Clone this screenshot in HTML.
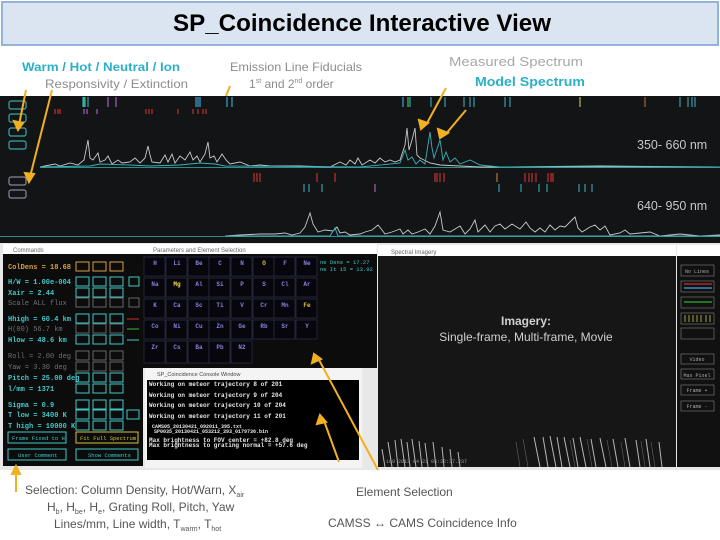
<!DOCTYPE html>
<html><head><meta charset="utf-8"><style>
body{margin:0;width:720px;height:540px;background:#fff;overflow:hidden;font-family:"Liberation Sans",sans-serif}
svg{display:block}
.m{font-family:"Liberation Mono",monospace}
</style></head><body>
<svg width="720" height="540" viewBox="0 0 720 540" xmlns="http://www.w3.org/2000/svg">
<rect x="2" y="2" width="716" height="43" fill="#dbe5f1" stroke="#95b3d7" stroke-width="2"/>
<text x="362" y="31" font-size="24" font-weight="bold" text-anchor="middle" fill="#000" textLength="378" lengthAdjust="spacingAndGlyphs">SP_Coincidence Interactive View</text>
<g font-size="12">
<text x="22" y="71" fill="#2bb0c8" font-weight="bold" textLength="158" lengthAdjust="spacingAndGlyphs">Warm / Hot / Neutral / Ion</text>
<text x="45" y="88" fill="#8c8c8c" textLength="143" lengthAdjust="spacingAndGlyphs">Responsivity / Extinction</text>
<text x="230" y="71" fill="#8c8c8c" textLength="132" lengthAdjust="spacingAndGlyphs">Emission Line Fiducials</text>
<text x="249" y="88" fill="#8c8c8c">1<tspan font-size="7" dy="-5">st</tspan><tspan dy="5"> and 2</tspan><tspan font-size="7" dy="-5">nd</tspan><tspan dy="5"> order</tspan></text>
<text x="449" y="66" fill="#a8a8a8" font-size="13" textLength="134" lengthAdjust="spacingAndGlyphs">Measured Spectrum</text>
<text x="475" y="86" fill="#2bb0c8" font-weight="bold" font-size="13" textLength="110" lengthAdjust="spacingAndGlyphs">Model Spectrum</text>
</g>
<rect x="0" y="96" width="720" height="148" fill="#131416"/>
<g fill="none" stroke="#3aa8a8" stroke-width="1.2">
<rect x="9" y="101" width="17" height="8" rx="2"/><rect x="9" y="114" width="17" height="8" rx="2"/><rect x="9" y="128" width="17" height="8" rx="2"/><rect x="9" y="141" width="17" height="8" rx="2"/>
<rect x="9" y="177" width="17" height="8" rx="2" stroke="#889"/><rect x="9" y="190" width="17" height="8" rx="2" stroke="#889"/>
</g>
<line x1="40" y1="167.5" x2="720" y2="167.5" stroke="#2a8c8c"/>
<line x1="0" y1="236.5" x2="720" y2="236.5" stroke="#2a8c8c"/>
<g stroke-width="1.2">
<path d="M83 97v10M85 97v10M88 97v10M196 97v10M198 97v10M200 97v10M227 97v10M232 97v10M403 97v10M410 97v10" stroke="#3aa0d0"/>
<path d="M84 97v10" stroke="#30d040"/>
<path d="M108 97v10M116 97v10" stroke="#a060c0"/>
<path d="M55 109v5M58 109v5M60 109v5M146 109v5M149 109v5M152 109v5M178 109v5M193 109v5M198 109v5M203 109v5M206 109v5" stroke="#c03030"/>
<path d="M84 109v5M87 109v5M97 109v5" stroke="#a060c0"/>
<path d="M408 97v10" stroke="#40c040"/>
<path d="M431 97v10M445 97v10M464 97v10M470 97v10M474 97v10M505 97v10M510 97v10M680 97v10M688 97v10M692 97v10M695 97v10" stroke="#3a9aaa"/>
<path d="M580 97v10" stroke="#c0b060"/><path d="M645 97v10" stroke="#a06040"/>
<path d="M254 173v9M257 173v9M260 173v9M317 173v9M335 173v9M435 173v9M437 173v9M440 173v9M444 173v9M525 173v9M529 173v9M532 173v9M536 173v9M548 173v9M551 173v9M553 173v9" stroke="#c03030"/>
<path d="M304 184v8M309 184v8M322 184v8M499 184v8M521 184v8M539 184v8M547 184v8M579 184v8M585 184v8M592 184v8" stroke="#3a9aaa"/>
<path d="M375 184v8" stroke="#a060a0"/><path d="M497 173v9" stroke="#c07040"/>
</g>
<polyline fill="none" stroke="#c8c8c8" stroke-width="0.9" points="40,167 55,164 60,166 70,163 78,165 84,160 88,140 90,158 93,160 98,153 100,162 105,160 108,156 112,164 118,160 122,163 130,162 135,158 140,163 145,158 148,146 150,155 152,162 160,163 165,155 168,162 172,154 175,163 180,156 185,160 190,152 193,160 197,156 200,162 205,154 208,142 210,158 214,156 217,162 222,154 226,160 230,164 240,162 250,166 260,165 270,166 300,166 330,167 340,162 346,165 350,160 355,164 358,158 362,165 370,160 375,163 380,158 385,162 390,160 395,162 400,160 405,145 407,128 409,150 412,140 415,128 417,155 420,158 424,160 430,163 440,165 460,166 480,167 500,167 600,166 720,167"/>
<polyline fill="none" stroke="#3ab0b8" stroke-width="0.9" points="40,167 90,166 100,164 130,165 150,166 180,165 200,163 215,164 225,166 360,167 400,163 405,150 408,160 412,157 416,164 420,160 425,164 430,132 432,148 434,158 440,140 443,160 446,152 450,162 455,158 460,164 470,160 480,165 500,167 720,167"/>
<polyline fill="none" stroke="#c8c8c8" stroke-width="0.9" points="225,236 240,235 260,234 275,234 285,233 292,235 300,233 305,227 310,213 313,224 318,232 325,230 333,231 337,227 340,233 345,232 350,235 360,234 365,232 372,230 378,225 382,230 385,234 392,232 400,229 403,234 408,230 412,234 418,232 425,229 430,234 435,226 440,212 443,230 450,232 460,226 465,234 470,229 475,220 478,232 485,225 490,232 495,226 500,224 505,229 512,224 520,229 526,222 530,228 535,232 540,228 545,232 550,225 555,230 560,226 565,227 570,222 575,217 578,228 582,232 590,227 595,225 600,230 605,226 610,235 620,233 625,230 630,234 640,233 650,232 660,236 680,234 700,236 720,235"/>
<polyline fill="none" stroke="#3ab0b8" stroke-width="1" points="225,236 330,236 335,228 338,236 720,236"/>
<g font-size="12.5" fill="#c8c8c8"><text x="637" y="149">350- 660 nm</text><text x="637" y="210">640- 950 nm</text></g>
<rect x="0" y="243" width="720" height="227" fill="#e8e8e8"/>
<rect x="3" y="244" width="140" height="10" fill="#fff"/>
<text x="13" y="252" font-size="6" fill="#666">Commands</text>
<rect x="3" y="254" width="140" height="212" fill="#0c0c0c"/>
<g class="m" font-size="7" font-weight="bold">
<text x="8" y="269" fill="#d8a040">ColDens = 18.68</text>
<text x="8" y="284" fill="#40c8c8">H/W   = 1.00e-004</text>
<text x="8" y="295" fill="#40c8c8">Xair  = 2.44</text>
<text x="8" y="305" fill="#707070" font-weight="normal">Scale ALL flux</text>
<text x="8" y="321" fill="#40c8c8">Hhigh =  60.4 km</text>
<text x="8" y="331" fill="#707070" font-weight="normal">H(00)    56.7 km</text>
<text x="8" y="342" fill="#40c8c8">Hlow  =  48.6 km</text>
<text x="8" y="358" fill="#707070" font-weight="normal">Roll  = 2.00 deg</text>
<text x="8" y="369" fill="#707070" font-weight="normal">Yaw   = 3.30 deg</text>
<text x="8" y="380" fill="#40c8c8">Pitch = 25.00 deg</text>
<text x="8" y="391" fill="#40c8c8">l/mm  = 1371</text>
<text x="8" y="407" fill="#40c8c8">Sigma  =  0.9</text>
<text x="8" y="417" fill="#40c8c8">T low  =  3400 K</text>
<text x="8" y="428" fill="#40c8c8">T high = 10000 K</text>
</g>
<g fill="none" stroke-width="1" font-size="7">
<g stroke="#d8a040"><rect x="76" y="262" width="13" height="9"/><rect x="93" y="262" width="13" height="9"/><rect x="110" y="262" width="13" height="9"/></g>
<g stroke="#40c8c8">
<rect x="76" y="277" width="13" height="9"/><rect x="93" y="277" width="13" height="9"/><rect x="110" y="277" width="13" height="9"/><rect x="129" y="277" width="10" height="9"/>
<rect x="76" y="288" width="13" height="9"/><rect x="93" y="288" width="13" height="9"/><rect x="110" y="288" width="13" height="9"/>
<rect x="76" y="314" width="13" height="9"/><rect x="93" y="314" width="13" height="9"/><rect x="110" y="314" width="13" height="9"/>
<rect x="76" y="335" width="13" height="9"/><rect x="93" y="335" width="13" height="9"/><rect x="110" y="335" width="13" height="9"/>
<rect x="76" y="373" width="13" height="9"/><rect x="93" y="373" width="13" height="9"/><rect x="110" y="373" width="13" height="9"/>
<rect x="76" y="384" width="13" height="9"/><rect x="93" y="384" width="13" height="9"/><rect x="110" y="384" width="13" height="9"/>
<rect x="76" y="400" width="13" height="9"/><rect x="93" y="400" width="13" height="9"/><rect x="110" y="400" width="13" height="9"/>
<rect x="76" y="410" width="13" height="9"/><rect x="93" y="410" width="13" height="9"/><rect x="110" y="410" width="13" height="9"/><rect x="127" y="410" width="12" height="9"/>
<rect x="76" y="421" width="13" height="9"/><rect x="93" y="421" width="13" height="9"/><rect x="110" y="421" width="13" height="9"/>
<rect x="8" y="432" width="58" height="11"/><rect x="8" y="449" width="58" height="11"/><rect x="76" y="449" width="62" height="11"/>
</g>
<g stroke="#666">
<rect x="76" y="298" width="13" height="9"/><rect x="93" y="298" width="13" height="9"/><rect x="110" y="298" width="13" height="9"/><rect x="129" y="298" width="10" height="9"/>
<rect x="76" y="324" width="13" height="9"/><rect x="93" y="324" width="13" height="9"/><rect x="110" y="324" width="13" height="9"/>
<rect x="76" y="351" width="13" height="9"/><rect x="93" y="351" width="13" height="9"/><rect x="110" y="351" width="13" height="9"/>
<rect x="76" y="362" width="13" height="9"/><rect x="93" y="362" width="13" height="9"/><rect x="110" y="362" width="13" height="9"/>
</g>
<rect x="76" y="432" width="62" height="11" stroke="#d8c040"/>
<path d="M127 319h12" stroke="#c03030"/><path d="M127 329h12" stroke="#30c030"/><path d="M127 340h12" stroke="#40c8c8"/>
</g>
<g font-size="5.5" fill="#40c8c8" class="m"><text x="12" y="440">Frame Fixed to H</text><text x="80" y="440" fill="#d8c040">Fit Full Spectrum</text><text x="18" y="457">User Comment</text><text x="88" y="457">Show Comments</text></g>
<rect x="143" y="244" width="234" height="10" fill="#fff"/>
<text x="153" y="252" font-size="6" fill="#666">Parameters and Element Selection</text>
<rect x="143" y="254" width="234" height="114" fill="#0c0c0c"/>
<g fill="#06060c" stroke="#2c2c44" stroke-width="0.8">
<rect x="144" y="257" width="21" height="19"/><rect x="166" y="257" width="21" height="19"/><rect x="188" y="257" width="21" height="19"/><rect x="209" y="257" width="21" height="19"/><rect x="231" y="257" width="21" height="19"/><rect x="253" y="257" width="21" height="19"/><rect x="274" y="257" width="21" height="19"/><rect x="296" y="257" width="21" height="19"/>
<rect x="144" y="278" width="21" height="19"/><rect x="166" y="278" width="21" height="19"/><rect x="188" y="278" width="21" height="19"/><rect x="209" y="278" width="21" height="19"/><rect x="231" y="278" width="21" height="19"/><rect x="253" y="278" width="21" height="19"/><rect x="274" y="278" width="21" height="19"/><rect x="296" y="278" width="21" height="19"/>
<rect x="144" y="299" width="21" height="19"/><rect x="166" y="299" width="21" height="19"/><rect x="188" y="299" width="21" height="19"/><rect x="209" y="299" width="21" height="19"/><rect x="231" y="299" width="21" height="19"/><rect x="253" y="299" width="21" height="19"/><rect x="274" y="299" width="21" height="19"/><rect x="296" y="299" width="21" height="19"/>
<rect x="144" y="320" width="21" height="19"/><rect x="166" y="320" width="21" height="19"/><rect x="188" y="320" width="21" height="19"/><rect x="209" y="320" width="21" height="19"/><rect x="231" y="320" width="21" height="19"/><rect x="253" y="320" width="21" height="19"/><rect x="274" y="320" width="21" height="19"/><rect x="296" y="320" width="21" height="19"/>
<rect x="144" y="341" width="21" height="22"/><rect x="166" y="341" width="21" height="22"/><rect x="188" y="341" width="21" height="22"/><rect x="209" y="341" width="21" height="22"/><rect x="231" y="341" width="21" height="22"/>
</g>
<g font-size="6" font-weight="bold" fill="#8a80e0" class="m" text-anchor="middle">
<text x="155" y="265">H</text><text x="177" y="265">Li</text><text x="199" y="265">Be</text><text x="220" y="265">C</text><text x="242" y="265">N</text><text x="264" y="265" fill="#e0c040">O</text><text x="285" y="265">F</text><text x="307" y="265">Ne</text>
<text x="155" y="286">Na</text><text x="177" y="286" fill="#f0e040">Mg</text><text x="199" y="286">Al</text><text x="220" y="286">Si</text><text x="242" y="286">P</text><text x="264" y="286">S</text><text x="285" y="286">Cl</text><text x="307" y="286">Ar</text>
<text x="155" y="307">K</text><text x="177" y="307">Ca</text><text x="199" y="307">Sc</text><text x="220" y="307">Ti</text><text x="242" y="307">V</text><text x="264" y="307">Cr</text><text x="285" y="307">Mn</text><text x="307" y="307" fill="#e0c040">Fe</text>
<text x="155" y="328">Co</text><text x="177" y="328">Ni</text><text x="199" y="328">Cu</text><text x="220" y="328">Zn</text><text x="242" y="328">Ge</text><text x="264" y="328">Rb</text><text x="285" y="328">Sr</text><text x="307" y="328">Y</text>
<text x="155" y="349">Zr</text><text x="177" y="349">Cs</text><text x="199" y="349">Ba</text><text x="220" y="349">Pb</text><text x="242" y="349">N2</text>
</g>
<g class="m" font-size="5.5" fill="#40c8c8"><text x="320" y="264">ne Dens = 17.27</text><text x="320" y="271">ne It 15 = 13.92</text></g>
<rect x="145" y="368" width="217" height="100" fill="#f4f4f4"/>
<text x="157" y="376" font-size="5.5" fill="#444">SP_Coincidence Console Window</text>
<rect x="147" y="380" width="212" height="80" fill="#000"/>
<g class="m" font-size="6" fill="#e8e8e8" font-weight="bold">
<text x="149" y="386">Working on meteor trajectory 8 of 201</text>
<text x="149" y="397">Working on meteor trajectory 9 of 204</text>
<text x="149" y="407">Working on meteor trajectory 10 of 204</text>
<text x="149" y="418">Working on meteor trajectory 11 of 201</text>
<text x="152" y="428" font-size="5">CAMS05_20130421_092011_395.txt</text>
<text x="154" y="433" font-size="5">SP0035_20130421_053212_393_0179736.bin</text>
<text x="149" y="442">Max brightness to FOV center    =  +82.8 deg</text>
<text x="149" y="447">Max brightness to grating normal = +57.6 deg</text>
</g>
<rect x="378" y="245" width="298" height="11" fill="#fff"/>
<text x="391" y="254" font-size="6" fill="#666">Spectral Imagery</text>
<rect x="378" y="256" width="298" height="211" fill="#161616"/>
<g stroke="#ddd" stroke-width="1" opacity="0.8">
<path d="M385 467l-3-18M392 467l-4-25M398 467l-3-27M405 467l-4-28M410 467l-3-25M416 467l-4-28M422 467l-3-26M428 467l-3-24M436 467l-3-25M444 467l-2-20M452 467l-2-18M460 467l-2-15"/>
<path d="M540 467l-6-30M548 467l-5-30M556 467l-6-31M562 467l-5-30M570 467l-6-30M578 467l-5-29M586 467l-6-30M596 467l-5-28M606 467l-6-29M618 467l-5-28M630 467l-5-29M640 467l-4-27M650 467l-4-28M662 467l-3-25"/>
</g>
<g stroke="#666" stroke-width="0.6"><path d="M520 467l-4-25M528 467l-5-28M575 467l-5-27M592 467l-5-28M612 467l-5-27M625 467l-4-25M645 467l-4-26M655 467l-4-25"/></g>
<text x="386" y="463" font-size="5" fill="#999" class="m">169 2013 04 21 05:32:37.237</text>
<text x="526" y="325" font-size="12" fill="#cfcfcf" text-anchor="middle" font-weight="bold">Imagery:</text>
<text x="526" y="341" font-size="12" fill="#cfcfcf" text-anchor="middle">Single-frame,  Multi-frame,  Movie</text>
<rect x="677" y="245" width="43" height="11" fill="#fff"/>
<rect x="677" y="256" width="43" height="211" fill="#111"/>
<g fill="none" stroke="#666" stroke-width="0.8">
<rect x="681" y="265" width="33" height="11"/><rect x="681" y="281" width="33" height="11"/><rect x="681" y="297" width="33" height="11"/><rect x="681" y="313" width="33" height="11"/><rect x="681" y="328" width="33" height="11"/>
<rect x="681" y="354" width="33" height="10"/><rect x="681" y="369" width="33" height="10"/><rect x="681" y="385" width="33" height="10"/><rect x="681" y="401" width="33" height="10"/>
</g>
<path d="M684 284h28" stroke="#d03030" stroke-width="1.3"/><path d="M684 288h28" stroke="#40a0e0" stroke-width="1.3"/><path d="M684 302h28" stroke="#30b030" stroke-width="1.3"/>
<path d="M685 315v7M689 315v7M693 315v7M697 315v7M701 315v7M706 315v7M710 315v7" stroke="#a0a040"/>
<g font-size="5" fill="#aaa" class="m" text-anchor="middle"><text x="697" y="273">No Lines</text><text x="697" y="361">Video</text><text x="697" y="377">Max Pixel</text><text x="697" y="392">Frame +</text><text x="697" y="408">Frame -</text></g>
<g stroke="#f0b020" stroke-width="2" fill="#f0b020">
<path d="M26 90L19 125" fill="none"/><path d="M14 121l4 9 5-7z"/>
<path d="M52 90L30 177" fill="none"/><path d="M25 173l4 9 5-8z"/>
<path d="M230 86L226 96" fill="none"/>
<path d="M446 88L426 125" fill="none"/><path d="M419 120l2 9 7-6z"/>
<path d="M466 110L445 135" fill="none"/><path d="M438 129l2 9 8-5z"/>
<path d="M16 492V470" fill="none"/><path d="M12 474l4-8 4 8z"/>
<path d="M339 462L323 418" fill="none"/><path d="M317 424l3-9 6 7z"/>
<path d="M378 470L318 358" fill="none"/><path d="M312 363l2-9 7 5z"/>
</g>
<g font-size="12" fill="#555">
<text x="25" y="494">Selection:  Column Density,  Hot/Warn,  X<tspan font-size="7" dy="3">air</tspan></text>
<text x="47" y="511">H<tspan font-size="7" dy="3">b</tspan><tspan dy="-3">,  H</tspan><tspan font-size="7" dy="3">be</tspan><tspan dy="-3">,  H</tspan><tspan font-size="7" dy="3">e</tspan><tspan dy="-3">,  Grating Roll, Pitch, Yaw</tspan></text>
<text x="54" y="528">Lines/mm,  Line width,  T<tspan font-size="7" dy="3">warm</tspan><tspan dy="-3">,  T</tspan><tspan font-size="7" dy="3">hot</tspan></text>
<text x="356" y="496">Element Selection</text>
<text x="328" y="527">CAMSS ↔ CAMS  Coincidence Info</text>
</g>
</svg>
</body></html>
